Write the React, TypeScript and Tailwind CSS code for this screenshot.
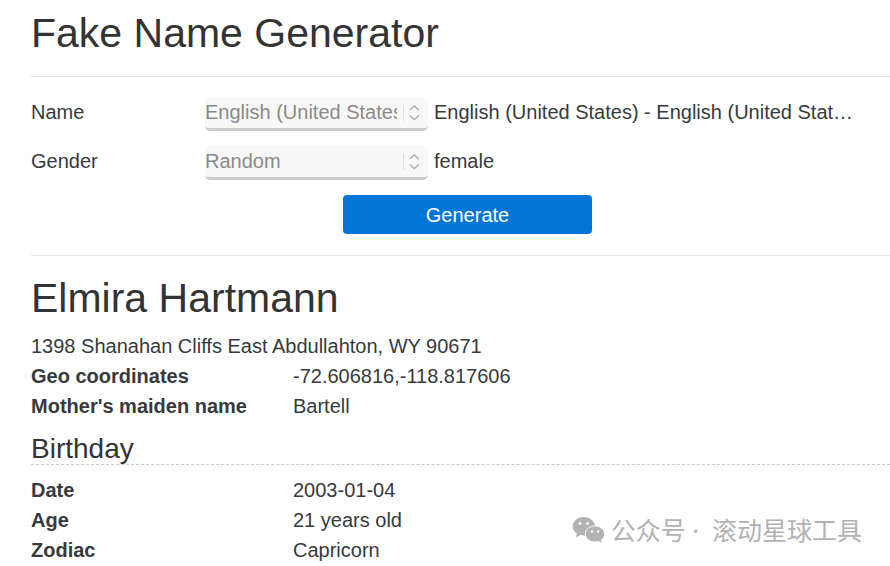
import React from "react";

// Options for the two drop-downs
const localeOptions = [
  { value: "en_US", label: "English (United States)" },
  { value: "en_GB", label: "English (United Kingdom)" },
  { value: "de_DE", label: "German (Germany)" },
];

const genderOptions = [
  { value: "random", label: "Random" },
  { value: "female", label: "female" },
  { value: "male", label: "male" },
];

const identityDetails = [
  { label: "Geo coordinates", value: "-72.606816,-118.817606" },
  { label: "Mother's maiden name", value: "Bartell" },
];

const birthdayDetails = [
  { label: "Date", value: "2003-01-04" },
  { label: "Age", value: "21 years old" },
  { label: "Zodiac", value: "Capricorn" },
];

interface SelectRowProps {
  id: string;
  label: string;
  options: { value: string; label: string }[];
  result: string;
}

const SelectRow: React.FC<SelectRowProps> = ({
  id,
  label,
  options,
  result,
}) => {
  return (
    <div className="flex items-start">
      <label htmlFor={id} className="w-[174px] shrink-0">
        {label}
      </label>
      <div className="relative w-[223px] shrink-0">
        <select
          id={id}
          className="block h-[34px] w-full appearance-none rounded-[5px] border-b-3 border-[#cccccc] bg-[#f8f8f8] pr-[31px] pb-0.5 text-[#8a8a8a]"
        >
          {options.map((option) => (
            <option key={option.value} value={option.value}>
              {option.label}
            </option>
          ))}
        </select>
        <span className="pointer-events-none absolute top-2 right-2 flex h-4 items-center border-l border-[#dddddd] pl-[5px]">
          <svg
            width="11"
            height="16"
            viewBox="0 0 11 16"
            fill="none"
            stroke="#aaaaaa"
            strokeWidth="1.3"
          >
            <path d="M1 5 5.300.800 9.600 5M1 10.500 5.300 14.700 9.600 10.500" />
          </svg>
        </span>
      </div>
      <output htmlFor={id} className="ml-1.5 min-w-0 truncate">
        {result}
      </output>
    </div>
  );
};

interface DetailListProps {
  items: { label: string; value: string }[];
}

const DetailList: React.FC<DetailListProps> = ({ items }) => {
  return (
    <dl>
      {items.map((item) => (
        <div key={item.label} className="flex">
          <dt className="w-[262px] shrink-0 font-bold">{item.label}</dt>
          <dd>{item.value}</dd>
        </div>
      ))}
    </dl>
  );
};

const WeChatIcon: React.FC = () => {
  return (
    <svg width="33" height="28" viewBox="0 0 33 28" fill="#b2b2b2">
      <path d="M11.800 1C5.600 1 .800 5.200.800 10.400c0 3 1.500 5.600 4 7.300L4 21.600l4.200-2.500c1.200.3 2.400.5 3.600.5 6.200 0 11.200-4.100 11.200-9.200S18 1 11.800 1Z" />
      <path
        d="M23 10c-5.400 0-9.700 3.500-9.700 8s4.300 8 9.700 8c1.200 0 2.300-.2 3.300-.5l4 2-.9-3.400c2-1.500 3.300-3.600 3.300-6.100 0-4.500-4.300-8-9.700-8Z"
        stroke="#ffffff"
        strokeWidth="1"
      />
      <g fill="#ffffff">
        <circle cx="8" cy="7.500" r="1.400" />
        <circle cx="15.500" cy="7.500" r="1.400" />
        <circle cx="20" cy="15.500" r="1.200" />
        <circle cx="26" cy="15.500" r="1.200" />
      </g>
    </svg>
  );
};

const App: React.FC = () => {
  return (
    <div className="relative min-h-screen overflow-hidden bg-white pt-2 pl-[31px] font-['Liberation_Sans',Arial,sans-serif] text-[20px] leading-[30px] text-[#373a3c]">
      <h1 className="text-[41px] leading-[50px] text-[#333333]">
        Fake Name Generator
      </h1>

      {/* Generator form */}
      <form
        className="mt-[18px] border-y border-[#e3e3e3] pt-5 pb-[21px]"
        onSubmit={(e) => e.preventDefault()}
      >
        <div className="space-y-[15px] pr-[30px]">
          <SelectRow
            id="locale"
            label="Name"
            options={localeOptions}
            result="English (United States) - English (United States)"
          />
          <SelectRow
            id="gender"
            label="Gender"
            options={genderOptions}
            result="female"
          />
        </div>
        <div className="mt-[15px] flex justify-center pl-3.5">
          <button
            type="submit"
            className="h-[39px] w-[249px] rounded-[4px] bg-[#0275d8] text-white"
          >
            Generate
          </button>
        </div>
      </form>

      {/* Generated identity */}
      <h1 className="mt-[17px] text-[41px] leading-[50px] text-[#333333]">
        Elmira Hartmann
      </h1>
      <p className="mt-2">1398 Shanahan Cliffs East Abdullahton, WY 90671</p>
      <DetailList items={identityDetails} />

      <h3 className="mt-[13px] mb-2.5 border-b border-dashed border-[#c8c8c8] text-[28px] leading-[30px] text-[#333333]">
        Birthday
      </h3>
      <DetailList items={birthdayDetails} />

      {/* Watermark */}
      <div className="absolute right-7 bottom-[18px] flex items-center gap-1.5 font-['Noto_Sans','Noto_Sans_CJK_SC',sans-serif] text-[25px] leading-9 whitespace-nowrap text-[#b2b2b2]">
        <WeChatIcon />
        <span>公众号 ·&nbsp; 滚动星球工具</span>
      </div>
    </div>
  );
};

export default App;
